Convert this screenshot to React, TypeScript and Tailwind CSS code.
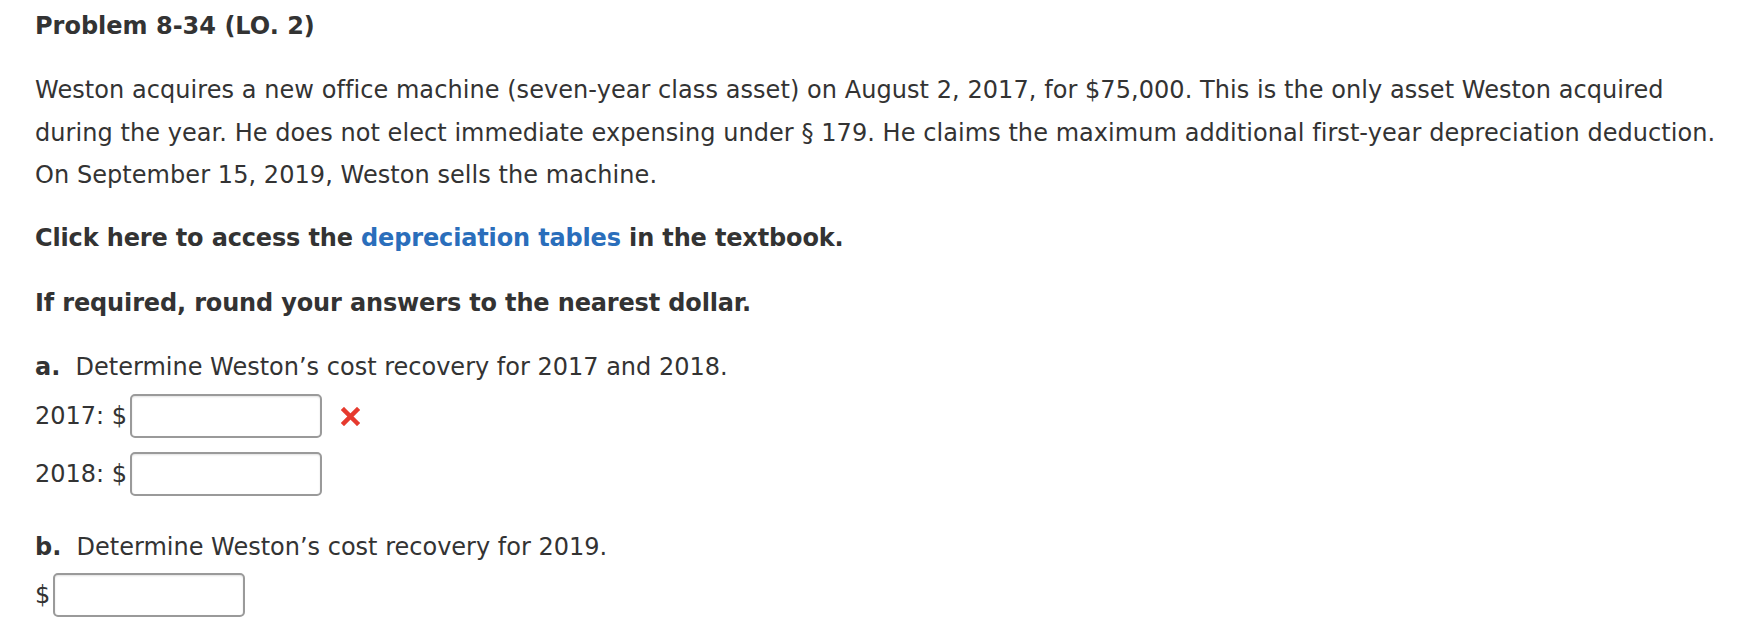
import React from "react";

const AnswerBox = () => (
  <input
    type="text"
    className="ml-[3px] w-[192px] h-[44px] rounded-[5px] border-2 border-[#9a9a9a] bg-white outline-none shadow-[inset_0_1px_2px_rgba(0,0,0,0.12)]"
  />
);

const WrongMark = () => (
  <svg width="19" height="19" viewBox="0 0 19 19" className="ml-[19px]">
    <path d="M3 3 L16 16 M16 3 L3 16" stroke="#e63a2e" strokeWidth="4.5" strokeLinecap="square" />
  </svg>
);

export default function App() {
  return (
    <div className="min-h-screen bg-white text-[#333333] text-[24px] leading-[42.5px] font-['DejaVu_Sans',Verdana,sans-serif] pl-[35px] pt-[5px]">
      <h1 className="font-bold">Problem 8-34 (LO. 2)</h1>

      <p className="mt-[21.75px] tracking-[0.06px]">
        Weston acquires a new office machine (seven-year class asset) on August 2, 2017, for $75,000. This is the only asset Weston acquired
        <br />
        during the year. He does not elect immediate expensing under § 179. He claims the maximum additional first-year depreciation deduction.
        <br />
        On September 15, 2019, Weston sells the machine.
      </p>

      <p className="mt-[20px] font-bold tracking-[-0.15px]">
        Click here to access the <a className="text-[#2a6ebb] cursor-pointer">depreciation tables</a> in the textbook.
      </p>

      <p className="mt-[22.5px] font-bold tracking-[-0.15px]">If required, round your answers to the nearest dollar.</p>

      {/* Part a */}
      <p className="mt-[21.5px]">
        <span className="font-bold">a.</span>&nbsp; Determine Weston’s cost recovery for 2017 and 2018.
      </p>
      <div className="mt-[5.75px] flex items-center">
        <span>2017: $</span>
        <AnswerBox />
        <WrongMark />
      </div>
      <div className="mt-[14px] flex items-center">
        <span>2018: $</span>
        <AnswerBox />
      </div>

      {/* Part b */}
      <p className="mt-[29.75px]">
        <span className="font-bold">b.</span>&nbsp; Determine Weston’s cost recovery for 2019.
      </p>
      <div className="mt-[5px] flex items-center">
        <span>$</span>
        <AnswerBox />
      </div>
    </div>
  );
}
